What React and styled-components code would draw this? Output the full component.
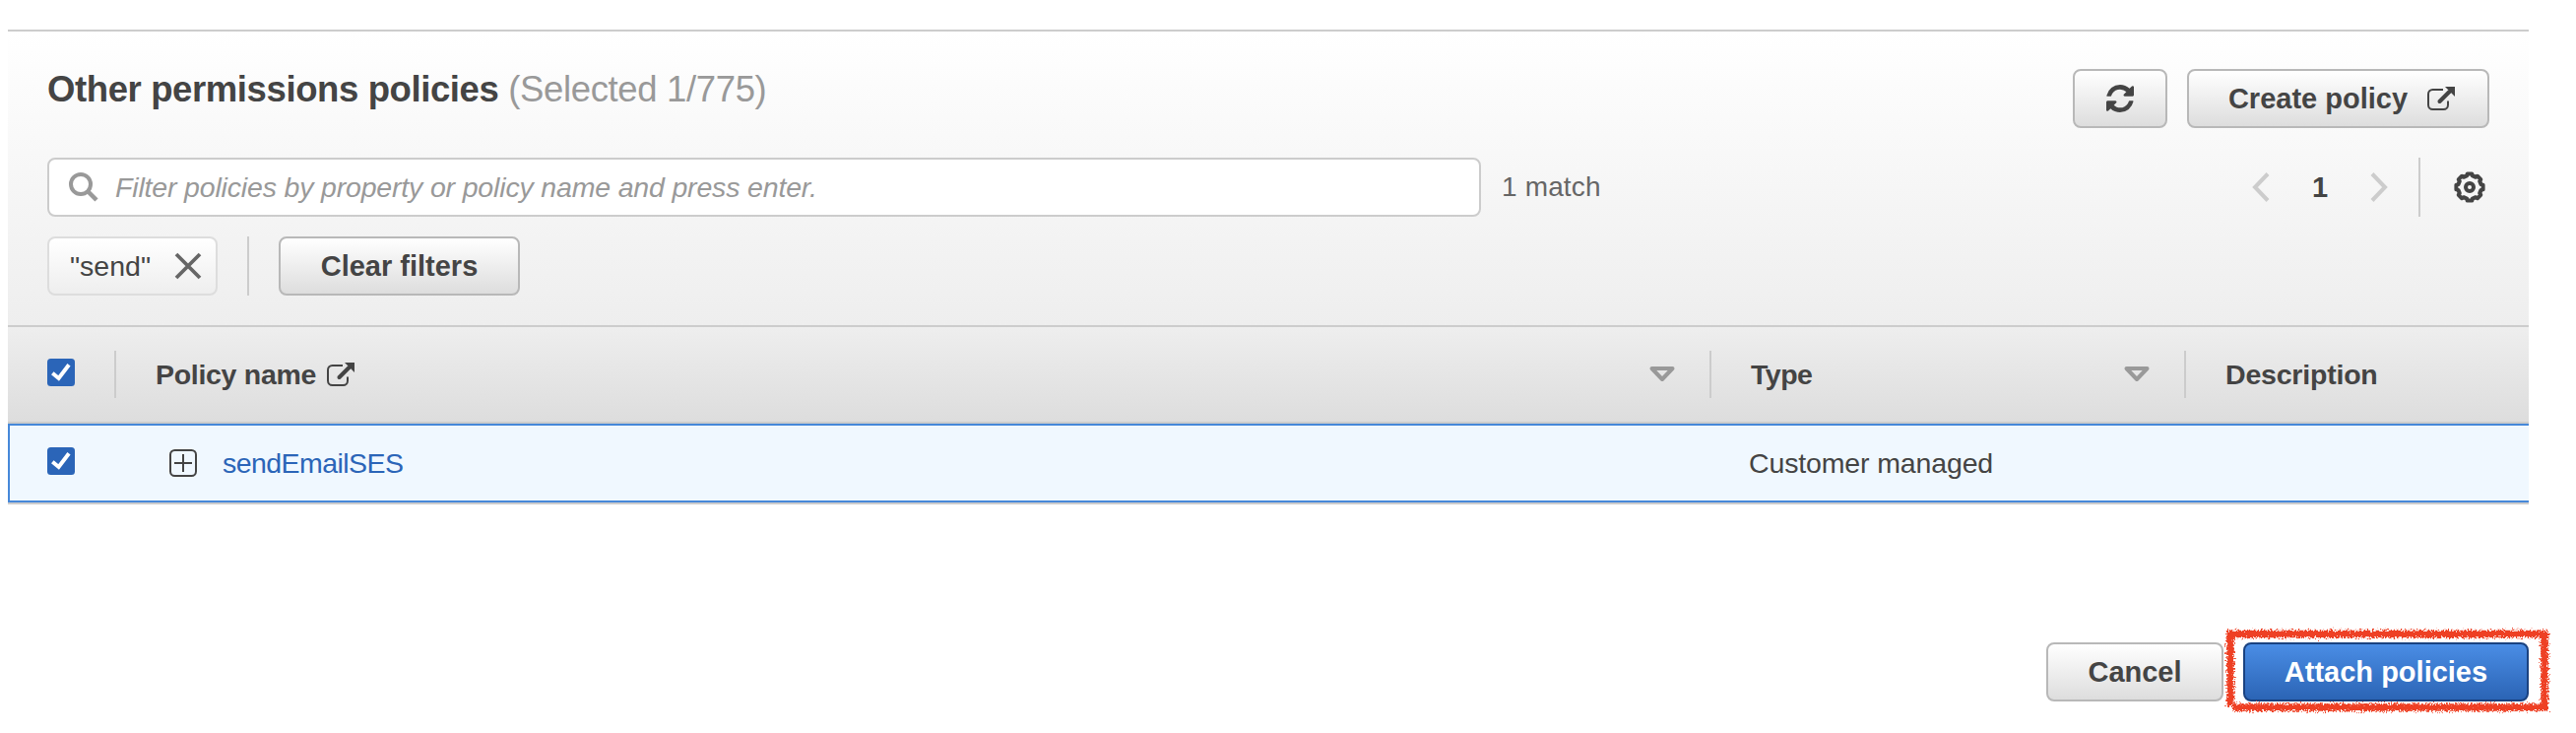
import React from "react";
import styled, { createGlobalStyle } from "styled-components";

const GlobalStyle = createGlobalStyle`
  * { box-sizing: border-box; }
  html, body { margin: 0; background: #fff; }
  body {
    font-family: "Liberation Sans", Arial, sans-serif;
    font-size: 28px;
    color: #444;
    overflow: hidden;
  }
  svg { display: block; flex: none; }
`;

const Page = styled.main`
  width: 2616px;
  height: 744px;
  padding: 30px 48px 0 8px;
  display: flex;
  flex-direction: column;
`;

const Panel = styled.section`
  border-top: 2px solid #ccc;
  background: linear-gradient(#fff, #eee);
  height: 300px;
  padding: 38px 40px 30px;
  display: flex;
  flex-direction: column;
`;

const TitleBar = styled.header`
  display: flex;
  justify-content: space-between;
  height: 60px;
  margin-bottom: 30px;
`;

const Title = styled.h2`
  margin: 0;
  font-size: 36.5px;
  line-height: 42px;
  letter-spacing: -0.39px;
  white-space: nowrap;
`;

const Count = styled.span`
  font-weight: 400;
  color: #999;
  letter-spacing: -0.35px;
`;

const ButtonGroup = styled.div`
  display: flex;
  gap: 20px;
`;

const Button = styled.button`
  display: flex;
  align-items: center;
  justify-content: center;
  gap: 20px;
  width: ${(p) => p.$width}px;
  height: 60px;
  padding: 0 0 0 ${(p) => p.$shift || 0}px;
  border: 2px solid ${(p) => (p.$primary ? "#1a4280" : "#b8b8b8")};
  border-radius: 8px;
  background: ${(p) =>
    p.$primary ? "linear-gradient(#4a8de5, #2b64b5)" : "linear-gradient(#fff, #ddd)"};
  color: ${(p) => (p.$primary ? "#fff" : "#444")};
  font: 700 29px/56px "Liberation Sans", Arial, sans-serif;
  white-space: nowrap;
`;

const FilterRow = styled.div`
  display: flex;
  align-items: center;
  height: 60px;
  margin-bottom: 20px;
`;

const SearchBox = styled.label`
  display: flex;
  align-items: center;
  gap: 17px;
  width: 1456px;
  height: 60px;
  padding-left: 20px;
  border: 2px solid #ccc;
  border-radius: 8px;
  background: #fff;
`;

const SearchInput = styled.input`
  flex: 1;
  height: 56px;
  padding: 1px 0 0;
  border: 0;
  border-radius: 8px;
  outline: 0;
  background: transparent;
  font: italic 28.5px "Liberation Sans", Arial, sans-serif;
  letter-spacing: -0.17px;
  &::placeholder { color: #999; opacity: 1; }
`;

const MatchCount = styled.span`
  margin-left: 21px;
  color: #666;
  line-height: 60px;
  letter-spacing: 0.15px;
`;

const Pagination = styled.nav`
  display: flex;
  align-items: center;
  margin-left: auto;
  height: 60px;
  padding-right: 4px;
`;

const PageNumber = styled.span`
  width: 102px;
  text-align: center;
  font-weight: 700;
  font-size: 29px;
`;

const Divider = styled.i`
  width: 2px;
  height: ${(p) => p.$height}px;
  margin: 0 ${(p) => p.$right || 0}px 0 ${(p) => p.$left || 0}px;
  background: #ccc;
  flex: none;
`;

const TokenRow = styled.div`
  display: flex;
  align-items: center;
  height: 60px;
`;

const Token = styled.div`
  display: flex;
  align-items: center;
  justify-content: space-between;
  width: 173px;
  height: 60px;
  padding: 0 14px 0 21px;
  border: 2px solid #ddd;
  border-radius: 8px;
  background: linear-gradient(#fff, #eee);
  font-size: 28.5px;
`;

const Row = styled.div`
  display: grid;
  grid-template-columns: 108px 1620px 482px 1fr;
  align-items: center;
`;

const HeadRow = styled(Row)`
  height: 100px;
  border-top: 2px solid #ccc;
  border-bottom: 2px solid #ccc;
  background: linear-gradient(#eee, #ddd);
  font-weight: 700;
`;

const SelectedFrame = styled.div`
  height: 82px;
  border-bottom: 2px solid #ccc;
`;

const SelectedRow = styled(Row)`
  height: 80px;
  border: 2px solid #4688d9;
  border-right: 0;
  background: #f0f8ff;
  grid-template-columns: 106px 1620px 482px 1fr;
`;

const CheckCell = styled.div`
  height: 100%;
  padding: ${(p) => p.$top}px 0 0 ${(p) => p.$left}px;
`;

const HeadCell = styled.div`
  display: flex;
  align-items: center;
  white-space: nowrap;
  font-size: 28.5px;
  letter-spacing: ${(p) => p.$spacing || 0}px;
`;

const SortSlot = styled.span`
  margin: 0 34px 0 auto;
`;

const NameCell = styled.div`
  display: flex;
  align-items: center;
  padding-left: 56px;
  gap: 25px;
`;

const PolicyLink = styled.a`
  color: #2b65b8;
  font-size: 28.5px;
  letter-spacing: -0.55px;
  padding: 1px 0 0 1px;
`;

const TypeCell = styled.div`
  padding: 1px 0 0 40px;
  font-size: 28.5px;
  letter-spacing: -0.14px;
`;

const LinkMark = styled.span`
  margin-left: 11px;
`;

const Footer = styled.footer`
  display: flex;
  justify-content: flex-end;
  gap: 20px;
  margin-top: 140px;
`;

const Highlighted = styled.div`
  position: relative;
`;

const Scribble = styled.svg`
  position: absolute;
  left: -22px;
  top: -17px;
  pointer-events: none;
`;

const External = () => (
  <svg width="28" height="24" viewBox="0 0 28 24" fill="none" stroke="#444">
    <path d="M16 3H5.5A4.5 4.5 0 0 0 1 7.5v11A4.5 4.5 0 0 0 5.500 23h11a4.500 4.500 0 0 0 4.500-4.500V14.500" strokeWidth="2" />
    <path d="M12.500 15L22.500 5" strokeWidth="4" strokeLinecap="round" />
    <path d="M18 0H28V10Z" fill="#444" stroke="none" />
  </svg>
);

const Refresh = () => (
  <svg width="28" height="28" viewBox="0 0 1536 1536" fill="#444">
    <path d="M1511 928q0 5-1 7-64 268-268 434.500t-478 166.500q-146 0-282.500-55t-243.500-157l-129 129q-19 19-45 19t-45-19-19-45v-448q0-26 19-45t45-19h448q26 0 45 19t19 45-19 45l-137 137q71 66 161 102t187 36q134 0 250-65t186-179q11-17 53-117 8-23 30-23h192q13 0 22.500 9.500t9.500 22.500zm25-800v448q0 26-19 45t-45 19h-448q-26 0-45-19t-19-45 19-45l138-138q-148-137-349-137-134 0-250 65t-186 179q-11 17-53 117-8 23-30 23h-199q-13 0-22.500-9.500t-9.500-22.500v-7q65-268 270-434.500t480-166.500q146 0 284 55.500t245 156.500l130-129q19-19 45-19t45 19 19 45z" />
  </svg>
);

const Search = () => (
  <svg width="30" height="30" viewBox="0 0 30 30" fill="none" stroke="#999">
    <circle cx="12" cy="12" r="10" strokeWidth="4" />
    <path d="M19 19L28 28" strokeWidth="4.500" />
  </svg>
);

const Close = () => (
  <svg width="28" height="28" viewBox="0 0 28 28" stroke="#666" strokeWidth="3.800">
    <path d="M2 2L26 26M26 2L2 26" />
  </svg>
);

const Chevron = ({ right }) => (
  <svg width="18" height="30" viewBox="0 0 18 30" fill="none" stroke="#ccc" strokeWidth="4">
    <path d={right ? "M2 1.500L15 15L2 28.500" : "M16 1.500L3 15L16 28.500"} />
  </svg>
);

const gearOutline = (() => {
  const points = [];
  for (let tooth = 0; tooth < 8; tooth += 1) {
    [[-10, 13.8], [10, 13.8], [14, 11.9], [31, 11.9]].forEach(([offset, radius]) => {
      const a = ((tooth * 45 + offset - 90) * Math.PI) / 180;
      points.push(`${(16 + radius * Math.cos(a)).toFixed(2)} ${(16 + radius * Math.sin(a)).toFixed(2)}`);
    });
  }
  return `M${points.join("L")}Z`;
})();

const Gear = () => (
  <svg width="32" height="32" viewBox="0 0 32 32" fill="none" stroke="#444">
    <path d={gearOutline} strokeWidth="4" strokeLinejoin="round" />
    <circle cx="16" cy="16" r="4" strokeWidth="4" />
  </svg>
);

const Check = () => (
  <svg width="28" height="28" viewBox="0 0 28 28" fill="none">
    <rect width="28" height="28" rx="3.500" fill="#2b65b8" />
    <path d="M5.300 14.800L11.600 20L22 6.200" stroke="#fff" strokeWidth="4" />
  </svg>
);

const Expand = () => (
  <svg width="28" height="28" viewBox="0 0 28 28" fill="none" stroke="#444" strokeWidth="2">
    <rect x="1" y="1" width="26" height="26" rx="4.500" />
    <path d="M5 14H23M14 5V23" />
  </svg>
);

const SortArrow = () => (
  <svg width="28" height="16" viewBox="0 0 28 16" fill="none" stroke="#999" strokeWidth="4">
    <path d="M3.500 2H24.500L14 13Z" strokeLinejoin="round" />
  </svg>
);

const RedFrame = () => (
  <Scribble width="338" height="94" viewBox="0 0 338 94" fill="none">
    <defs>
      <filter id="chalk" x="-5%" y="-10%" width="110%" height="120%" colorInterpolationFilters="sRGB">
        <feTurbulence type="fractalNoise" baseFrequency="0.600" numOctaves="3" seed="11" result="grain" />
        <feDisplacementMap in="SourceGraphic" in2="grain" scale="8" xChannelSelector="R" yChannelSelector="G" />
      </filter>
    </defs>
    <g filter="url(#chalk)" stroke="#ee4024" strokeWidth="7.500">
      <path d="M5 8.500H332" />
      <path d="M328 5V87" />
      <path d="M332 83H11" />
      <path d="M9 5V82" />
    </g>
  </Scribble>
);

export default function App() {
  return (
    <>
      <GlobalStyle />
      <Page>
        <Panel>
          <TitleBar>
            <Title>
              Other permissions policies <Count>(Selected 1/775)</Count>
            </Title>
            <ButtonGroup>
              <Button $width={96} aria-label="Refresh"><Refresh /></Button>
              <Button $width={307} $shift={7}>Create policy <External /></Button>
            </ButtonGroup>
          </TitleBar>
          <FilterRow>
            <SearchBox>
              <Search />
              <SearchInput placeholder="Filter policies by property or policy name and press enter." />
            </SearchBox>
            <MatchCount>1 match</MatchCount>
            <Pagination>
              <Chevron />
              <PageNumber>1</PageNumber>
              <Chevron right />
              <Divider $height={60} $left={31} $right={34} />
              <Gear />
            </Pagination>
          </FilterRow>
          <TokenRow>
            <Token>"send" <Close /></Token>
            <Divider $height={60} $left={30} $right={30} />
            <Button $width={245}>Clear filters</Button>
          </TokenRow>
        </Panel>
        <HeadRow>
          <CheckCell $left={40} $top={32}><Check /></CheckCell>
          <HeadCell $spacing={-0.3}>
            <Divider $height={48} $right={40} />
            Policy name
            <LinkMark><External /></LinkMark>
            <SortSlot><SortArrow /></SortSlot>
          </HeadCell>
          <HeadCell $spacing={-0.5}>
            <Divider $height={48} $right={40} />
            Type
            <SortSlot><SortArrow /></SortSlot>
          </HeadCell>
          <HeadCell $spacing={-0.2}>
            <Divider $height={48} $right={40} />
            Description
          </HeadCell>
        </HeadRow>
        <SelectedFrame>
          <SelectedRow>
            <CheckCell $left={38} $top={22}><Check /></CheckCell>
            <NameCell>
              <Expand />
              <PolicyLink>sendEmailSES</PolicyLink>
            </NameCell>
            <TypeCell>Customer managed</TypeCell>
          </SelectedRow>
        </SelectedFrame>
        <Footer>
          <Button $width={180}>Cancel</Button>
          <Highlighted>
            <Button $width={290} $primary>Attach policies</Button>
            <RedFrame />
          </Highlighted>
        </Footer>
      </Page>
    </>
  );
}
